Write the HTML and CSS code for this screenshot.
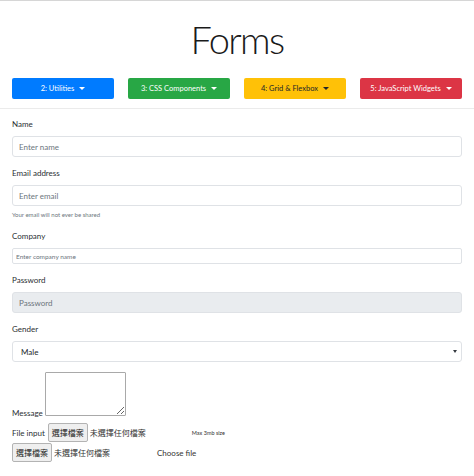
FILE: index.html
```html
<!DOCTYPE html>
<html lang="zh-Hant">
<head>
<meta charset="utf-8">
<title>Forms</title>
<link rel="stylesheet" href="styles.css">
</head>
<body>
<div class="page">
  <header class="hero">
    <h1 class="title">Forms</h1>
    <nav class="menu">
      <button class="menu-btn btn-blue" type="button">2: Utilities<span class="caret"></span></button>
      <button class="menu-btn btn-green" type="button">3: CSS Components<span class="caret"></span></button>
      <button class="menu-btn btn-yellow" type="button">4: Grid &amp; Flexbox<span class="caret"></span></button>
      <button class="menu-btn btn-red" type="button">5: JavaScript Widgets<span class="caret"></span></button>
    </nav>
  </header>
  <hr class="divider">
  <form class="form">
    <div class="group">
      <label class="label" for="name">Name</label>
      <input class="field" id="name" type="text" placeholder="Enter name">
    </div>
    <div class="group">
      <label class="label" for="email">Email address</label>
      <input class="field" id="email" type="email" placeholder="Enter email">
      <div class="help">Your email will not ever be shared</div>
    </div>
    <div class="group">
      <label class="label" for="company">Company</label>
      <input class="field field-sm" id="company" type="text" placeholder="Enter company name">
    </div>
    <div class="group">
      <label class="label" for="password">Password</label>
      <input class="field field-disabled" id="password" type="password" placeholder="Password" readonly>
    </div>
    <div class="group">
      <label class="label" for="gender">Gender</label>
      <select class="field select" id="gender">
        <option>Male</option>
        <option>Female</option>
      </select>
    </div>
    <div class="message-row">
      <label class="inline-label" for="message">Message</label> <textarea class="textarea" id="message"></textarea>
    </div>
    <div class="file-row">
      <span class="inline-label">File input</span>
      <label class="file">
        <span class="file-btn">選擇檔案</span>
        <span class="file-name">未選擇任何檔案</span>
      </label>
      <span class="file-note">Max 3mb size</span>
    </div>
    <div class="file-row file-row-2">
      <label class="file file-first">
        <span class="file-btn">選擇檔案</span>
        <span class="file-name">未選擇任何檔案</span>
      </label>
      <span class="file-choose">Choose file</span>
    </div>
  </form>
</div>
</body>
</html>
```

FILE: styles.css
```css
* { box-sizing: border-box; }

html, body {
  margin: 0;
  padding: 0;
  background: #fff;
}

body {
  font-family: Lato, "Noto Sans CJK TC", sans-serif;
  color: #212529;
}

.page {
  border-top: 1px solid #d6d6d6;
}

.hero {
  padding: 0 12px;
}

.title {
  margin: 15px 0 0;
  font-size: 38px;
  line-height: 47px;
  font-weight: 300;
  letter-spacing: -1.6px;
  text-align: center;
  color: #1a1a1a;
}

.menu {
  display: flex;
  justify-content: space-between;
  margin-top: 15px;
}

.menu-btn {
  width: 102px;
  height: 21px;
  padding: 0;
  border: none;
  border-radius: 2px;
  font-family: Lato, sans-serif;
  font-size: 7.5px;
  line-height: 21px;
  color: #fff;
  display: flex;
  align-items: center;
  justify-content: center;
}

.btn-blue { background: #007bff; }
.btn-green { background: #28a745; }
.btn-yellow { background: #ffc107; color: #212529; }
.btn-red { background: #dc3545; }

.caret {
  display: inline-block;
  width: 0;
  height: 0;
  margin-left: 5px;
  border-top: 3px solid currentColor;
  border-left: 3px solid transparent;
  border-right: 3px solid transparent;
}

.divider {
  margin: 9px 0 0;
  border: none;
  border-top: 1px solid #ebebeb;
  height: 0;
}

.form {
  padding: 9px 12px 0;
}

.group {
  margin-bottom: 10px;
}

.label {
  display: block;
  font-size: 8px;
  line-height: 13px;
  margin-bottom: 5px;
  color: #2b2f33;
}

.field {
  display: block;
  width: 100%;
  height: 21px;
  margin: 0;
  padding: 0 6px;
  border: 1px solid #dfe2e6;
  border-radius: 3px;
  background: #fff;
  font-family: Lato, sans-serif;
  font-size: 8px;
  color: #495057;
  outline: none;
}

.field::placeholder {
  color: #6c757d;
}

.field-sm {
  height: 16px;
  padding: 0 3px;
  font-size: 6.5px;
  border-radius: 2px;
}

.field-disabled {
  background: #e9ecef;
}

.select {
  appearance: none;
  -webkit-appearance: none;
  padding-left: 8px;
  color: #212529;
  background: #fff url("data:image/svg+xml,%3Csvg xmlns='http://www.w3.org/2000/svg' width='4' height='3'%3E%3Cpath d='M0 0h4L2 3z' fill='%23343a40'/%3E%3C/svg%3E") no-repeat right 4px center;
}

.help {
  margin-top: 4px;
  font-size: 6px;
  line-height: 10px;
  color: #6c757d;
}

.message-row {
  font-size: 8px;
  line-height: 13px;
  margin-bottom: 3px;
}

.inline-label {
  font-size: 8px;
  color: #2b2f33;
}

.textarea {
  width: 81px;
  height: 44px;
  margin: 0;
  padding: 2px;
  border: 1px solid #a9a9a9;
  border-radius: 1px;
  vertical-align: baseline;
  font-family: Lato, sans-serif;
  font-size: 8px;
}

.file-row {
  display: flex;
  align-items: center;
  height: 19px;
}

.file-row-2 {
  margin-top: 1px;
}

.file {
  display: flex;
  align-items: center;
  margin-left: 3px;
}

.file-first {
  margin-left: 0;
}

.file-btn {
  display: block;
  height: 19px;
  padding: 0 3px;
  border: 1px solid #b3b3b3;
  border-radius: 2px;
  background: #efefef;
  font-family: "Noto Sans CJK TC", sans-serif;
  font-size: 8px;
  line-height: 17px;
  color: #222;
}

.file-name {
  margin-left: 2px;
  font-family: "Noto Sans CJK TC", sans-serif;
  font-size: 8px;
  color: #333;
}

.file-note {
  margin-left: 46px;
  font-size: 5.5px;
  color: #333;
}

.file-choose {
  margin-left: 47px;
  font-size: 8px;
  color: #333;
}
```
